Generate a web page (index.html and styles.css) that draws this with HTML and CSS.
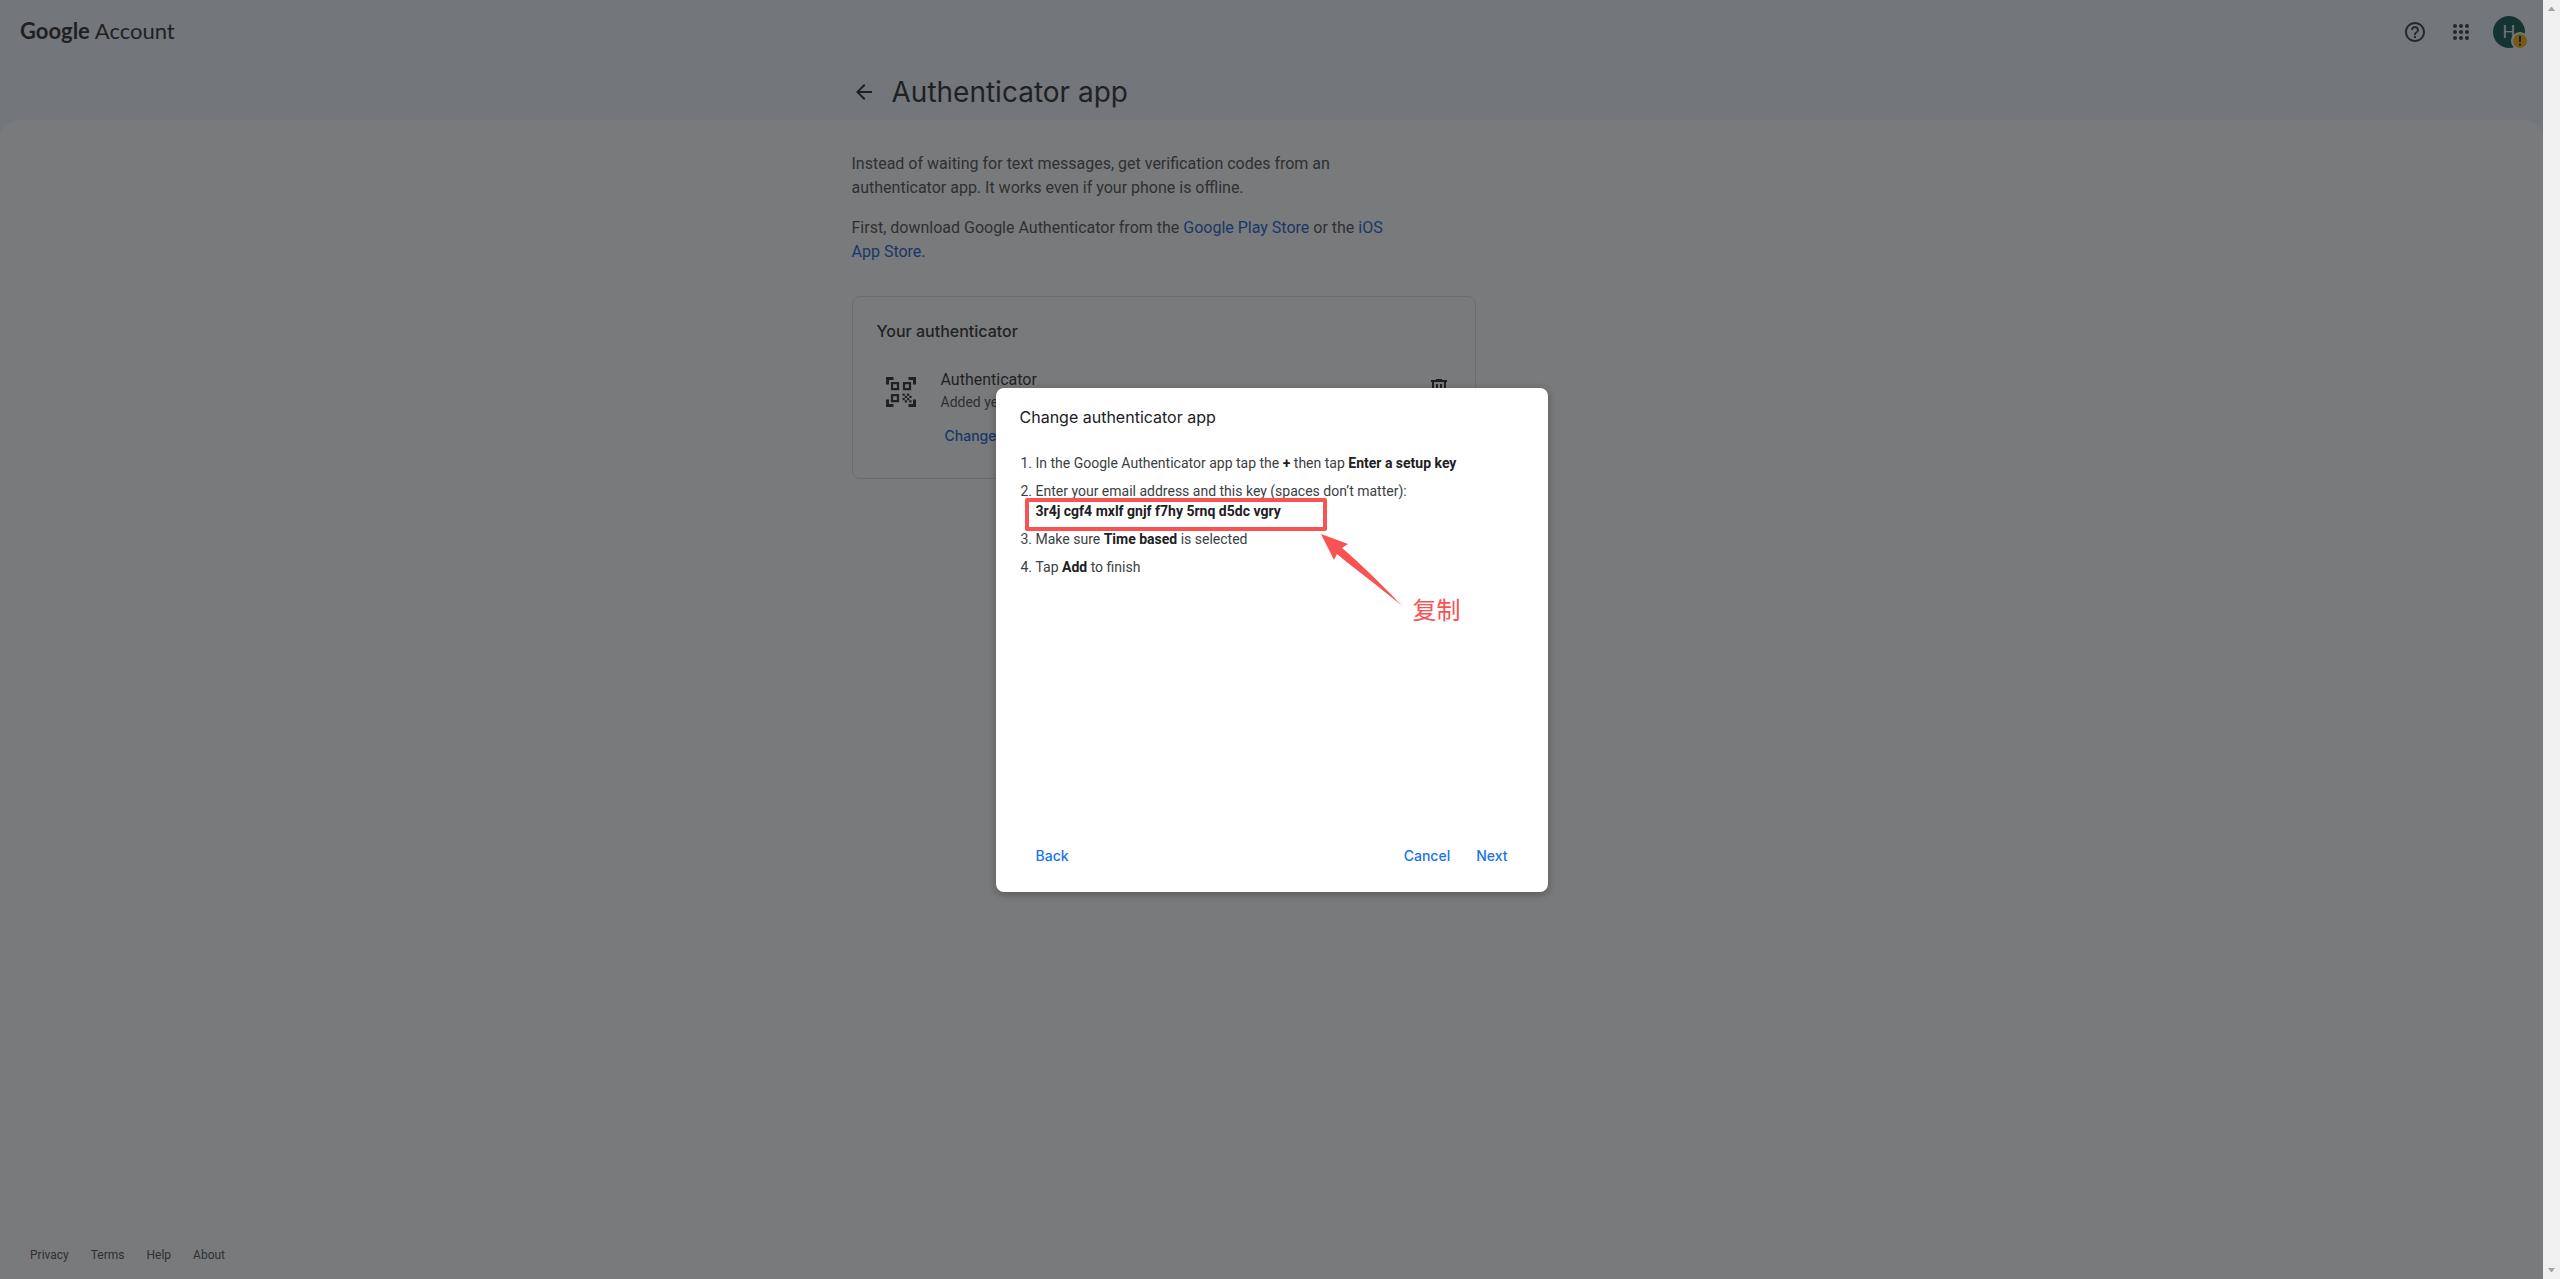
FILE: index.html
```html
<!DOCTYPE html>
<html lang="en">
<head>
    <meta charset="UTF-8">
    <meta name="viewport" content="width=device-width, initial-scale=1.0">
    <title>Authenticator app</title>
    <link rel="stylesheet" href="styles.css">
</head>
<body>
    <div class="page">
        <header class="top-bar">
            <a class="logo" href="#"><span class="logo-google">Google</span> <span class="logo-account">Account</span></a>
            <div class="tools">
                <button class="icon-btn" aria-label="Help">
                    <svg width="24" height="24" viewBox="0 0 24 24"><path d="M11 18h2v-2h-2v2zm1-16C6.48 2 2 6.48 2 12s4.48 10 10 10 10-4.48 10-10S17.52 2 12 2zm0 18c-4.41 0-8-3.59-8-8s3.59-8 8-8 8 3.59 8 8-3.59 8-8 8zm0-14c-2.21 0-4 1.79-4 4h2c0-1.1.9-2 2-2s2 .9 2 2c0 2-3 1.75-3 5h2c0-2.25 3-2.5 3-5 0-2.21-1.79-4-4-4z"/></svg>
                </button>
                <button class="icon-btn" aria-label="Google apps">
                    <svg width="24" height="24" viewBox="0 0 24 24"><circle cx="6" cy="6" r="2"/><circle cx="12" cy="6" r="2"/><circle cx="18" cy="6" r="2"/><circle cx="6" cy="12" r="2"/><circle cx="12" cy="12" r="2"/><circle cx="18" cy="12" r="2"/><circle cx="6" cy="18" r="2"/><circle cx="12" cy="18" r="2"/><circle cx="18" cy="18" r="2"/></svg>
                </button>
                <button class="account-btn" aria-label="Google Account">
                    <span class="avatar">H</span>
                    <svg class="badge" width="18" height="18" viewBox="0 0 18 18"><circle class="badge-ring" cx="9" cy="9" r="9"/><circle class="badge-dot" cx="9" cy="9" r="7"/><path class="badge-mark" d="M8 4h2v6H8zM8 11.500h2v2H8z"/></svg>
                </button>
            </div>
        </header>
        <div class="title-row container">
            <button class="back-arrow" aria-label="Back">
                <svg width="24" height="24" viewBox="0 0 24 24"><path d="M20 11H7.830l5.590-5.590L12 4l-8 8 8 8 1.410-1.410L7.830 13H20v-2z"/></svg>
            </button>
            <h1>Authenticator app</h1>
        </div>
        <main class="panel">
            <div class="container">
                <div class="intro">
                    <p>Instead of waiting for text messages, get verification codes from an authenticator app. It works even if your phone is offline.</p>
                    <p>First, download Google Authenticator from the <a href="#">Google Play Store</a> or the <a href="#">iOS App Store</a>.</p>
                </div>
                <section class="card">
                    <h2>Your authenticator</h2>
                    <div class="device">
                        <svg class="qr" width="36" height="36" viewBox="0 0 24 24">
                            <path class="qr-frame" d="M2 7V2h5v2H4v3zM22 7V2h-5v2h3v3zM2 17v5h5v-2H4v-3zM22 17v5h-5v-2h3v-3z"/>
                            <path class="qr-box" d="M6 6h4v4H6zM14 6h4v4h-4zM6 14h4v4H6z"/>
                            <path class="qr-frame" d="M13 13h1.500v1.500H13zM16 13h1.500v1.500H16zM14.500 14.500H16V16h-1.500zM17.500 14.500H19V16h-1.500zM13 16h1.500v1.500H13zM16 16h1.500v1.500H16zM14.500 17.500H16V19h-1.500zM17.500 17.500H19V19h-1.500z"/>
                        </svg>
                        <div class="device-info">
                            <div class="device-name">Authenticator</div>
                            <div class="device-date">Added yesterday</div>
                            <button class="text-btn change">Change authenticator app</button>
                        </div>
                        <button class="delete" aria-label="Delete">
                            <svg width="24" height="24" viewBox="0 0 24 24"><path d="M9 3v1H4v2h1v13c0 1.100.9 2 2 2h10c1.100 0 2-.9 2-2V6h1V4h-5V3H9zM7 6h10v13H7V6zm2 2v9h2V8H9zm4 0v9h2V8h-2z"/></svg>
                        </button>
                    </div>
                </section>
            </div>
            <footer class="links">
                <a href="#">Privacy</a>
                <a href="#">Terms</a>
                <a href="#">Help</a>
                <a href="#">About</a>
            </footer>
        </main>
        <div class="mask">
            <div class="dialog" role="dialog" aria-labelledby="dialog-title">
                <h2 id="dialog-title">Change authenticator app</h2>
                <ol>
                    <li>In the Google Authenticator app tap the <b>+</b> then tap <b>Enter a setup key</b></li>
                    <li>Enter your email address and this key (spaces don’t matter):<br><b>3r4j cgf4 mxlf gnjf f7hy 5rnq d5dc vgry</b></li>
                    <li>Make sure <b>Time based</b> is selected</li>
                    <li>Tap <b>Add</b> to finish</li>
                </ol>
                <div class="actions">
                    <button class="text-btn back">Back</button>
                    <button class="text-btn">Cancel</button>
                    <button class="text-btn">Next</button>
                </div>
                <div class="mark-box"></div>
                <svg class="mark-arrow" width="82" height="74" viewBox="0 0 82 74"><path d="M0 0l27 10-6 4c12 10 42 38 60 58C60 54 30 32 16 20l-3 6z"/></svg>
                <div class="mark-text" lang="zh">复制</div>
            </div>
        </div>
    </div>
    <div class="scrollbar">
        <svg width="7" height="4" viewBox="0 0 7 4"><path d="M0 4h7L4 0H3z"/></svg>
        <svg width="7" height="4" viewBox="0 0 7 4"><path d="M0 0h7L4 4H3z"/></svg>
    </div>
</body>
</html>
```
FILE: styles.css
```css
* {
    margin: 0;
    padding: 0;
    box-sizing: border-box;
}
body {
    display: flex;
    height: 100vh;
    font-family: Roboto, "Liberation Sans", sans-serif;
    color: #1f1f1f;
}
button {
    border: none;
    background: none;
    font: inherit;
    color: inherit;
    cursor: pointer;
}
a {
    color: #0b57d0;
    text-decoration: none;
}
svg {
    display: block;
    fill: currentColor;
}
.page {
    flex: 1;
    display: flex;
    flex-direction: column;
    position: relative;
    background-color: #f0f4f9;
}
.container {
    width: 100%;
    max-width: 840px;
    margin: 0 auto;
}

/* top bar */
.top-bar {
    height: 64px;
    padding: 0 12px 0 20px;
    display: flex;
    align-items: center;
    justify-content: space-between;
}
.logo {
    padding-bottom: 3px;
    font-family: Lato, sans-serif;
    font-size: 22px;
    color: #1f1f1f;
}
.logo-google {
    font-weight: 700;
}
.tools {
    display: flex;
    align-items: center;
    gap: 6px;
}
.icon-btn {
    padding: 8px;
    color: #303134;
}
.account-btn {
    padding: 6px;
    position: relative;
}
.avatar {
    display: block;
    width: 32px;
    height: 32px;
    border-radius: 50%;
    background-color: #005243;
    color: #e8eaed;
    font-size: 18px;
    line-height: 32px;
    text-align: center;
}
.badge {
    position: absolute;
    right: 2px;
    bottom: 4px;
}
.badge-ring {
    fill: #f0f4f9;
}
.badge-dot {
    fill: #f9ab00;
}
.badge-mark {
    fill: #202124;
}
.title-row {
    height: 56px;
    display: flex;
    align-items: center;
    gap: 16px;
}
.title-row h1 {
    font: 400 28px/36px Inter, sans-serif;
}

/* content */
.panel {
    flex: 1;
    display: flex;
    flex-direction: column;
    padding-top: 32px;
    border-radius: 20px 20px 0 0;
    background-color: #fff;
}
.intro {
    max-width: 560px;
    font-size: 16px;
    line-height: 24px;
    color: #444746;
}
.intro p + p {
    margin-top: 16px;
}
.card {
    max-width: 624px;
    margin-top: 32px;
    padding: 24px;
    border: 1px solid #dadce0;
    border-radius: 8px;
}
.card h2 {
    font: 500 16px/20px Inter, sans-serif;
}
.device {
    display: flex;
    margin-top: 27px;
    padding-left: 6px;
}
.qr {
    margin-top: 6px;
    margin-right: 22px;
}
.qr-frame {
    fill: #202124;
}
.qr-box {
    fill: none;
    stroke: #202124;
    stroke-width: 1.5;
}
.device-info {
    flex: 1;
}
.device-name {
    font-size: 16px;
    line-height: 24px;
}
.device-date {
    font-size: 14px;
    line-height: 20px;
    color: #444746;
}
.text-btn {
    height: 36px;
    padding: 0 12px;
    font: 500 14px/20px Inter, sans-serif;
    color: #1a73e8;
}
.text-btn.change {
    margin-top: 6px;
    padding: 0 4px;
    color: #0b57d0;
}
.delete {
    align-self: flex-start;
    margin-top: 8px;
}
.links {
    display: flex;
    gap: 22px;
    margin-top: auto;
    padding: 16px 30px;
    font-size: 12px;
    line-height: 16px;
}
.links a {
    color: #444746;
}

/* dialog */
.mask {
    position: absolute;
    top: 0;
    right: 0;
    bottom: 0;
    left: 0;
    display: flex;
    align-items: center;
    justify-content: center;
    background-color: rgba(32, 33, 36, 0.6);
}
.dialog {
    display: flex;
    flex-direction: column;
    position: relative;
    width: 552px;
    min-height: 504px;
    padding: 17px 24px 18px;
    border-radius: 8px;
    background-color: #fff;
    box-shadow: 0 2px 8px rgba(0, 0, 0, 0.3);
    color: #202124;
}
.dialog h2 {
    font: 400 16px/24px Inter, sans-serif;
}
.dialog ol {
    margin-top: 24px;
    padding-left: 16px;
    font-size: 14px;
    line-height: 20px;
    color: #3c4043;
}
.dialog li {
    margin-bottom: 8px;
}
.dialog b {
    color: #202124;
}
.actions {
    display: flex;
    gap: 2px;
    margin-top: auto;
    padding: 0 4px;
}
.actions .back {
    margin-right: auto;
}

/* red marks over the dialog */
.mark-box {
    position: absolute;
    top: 110px;
    left: 29px;
    width: 302px;
    height: 33px;
    border: 4px solid #fa5252;
    border-radius: 2px;
}
.mark-arrow {
    position: absolute;
    top: 146px;
    left: 325px;
    fill: #fa5252;
}
.mark-text {
    position: absolute;
    top: 203px;
    left: 417px;
    font: 400 24px/36px "Noto Sans CJK SC", sans-serif;
    color: #fa5252;
}

.scrollbar {
    display: flex;
    flex-direction: column;
    align-items: center;
    justify-content: space-between;
    width: 17px;
    padding: 7px 0;
    background-color: #f0f0f0;
    color: #a3a3a3;
}
```
